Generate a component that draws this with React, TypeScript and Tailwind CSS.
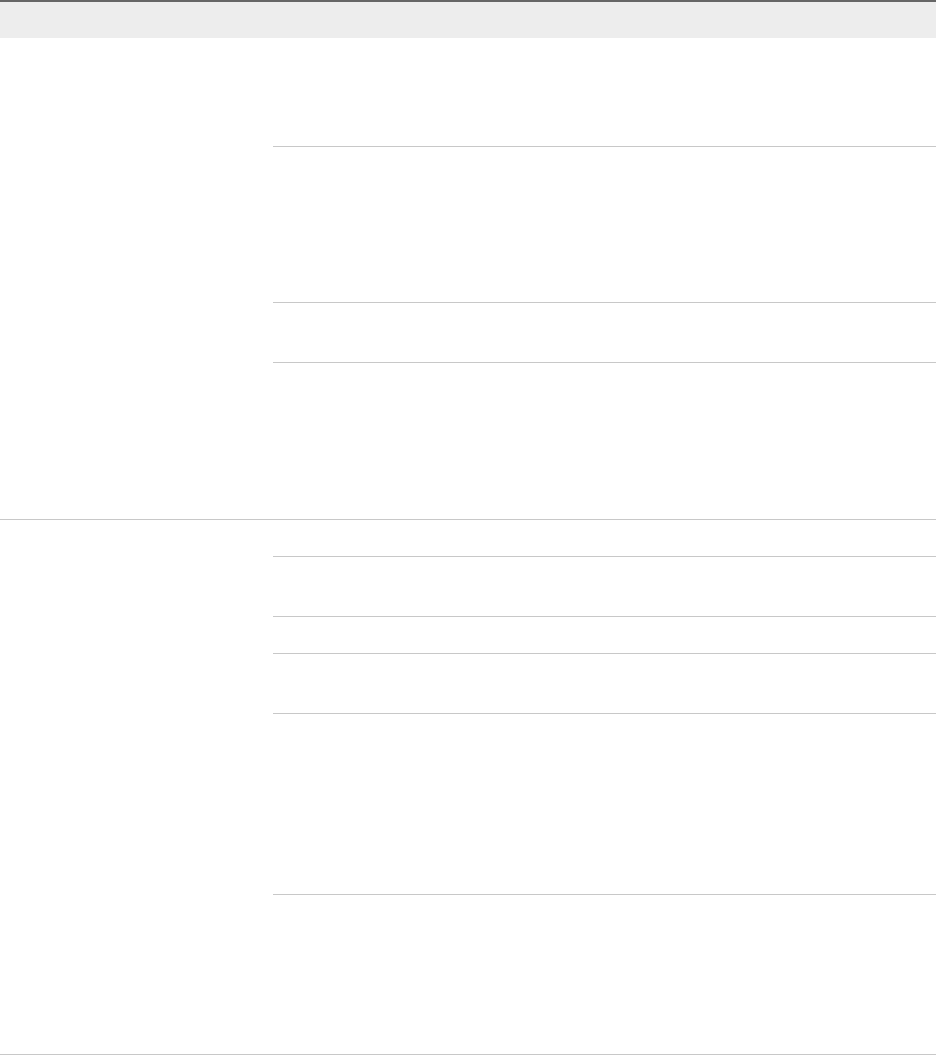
// row box heights (border-box, border included where a row has one)
const groups: number[][] = [
  [109, 156, 60, 156],
  [37, 60, 37, 60, 181, 159],
];

export default function App() {
  return (
    <div className="w-[936px] bg-white font-['Liberation_Sans',sans-serif]">
      {/* Table head */}
      <div className="h-[38px] border-t-2 border-[#666666] bg-[#ededed]" />

      {groups.map((rows, gi) => (
        <div key={gi} className="flex border-b border-[#c8c8c8]">
          <div className="w-[273px] shrink-0" />
          <div className="flex-1">
            {rows.map((h, ri) => (
              <div
                key={ri}
                className={ri < rows.length - 1 ? 'border-b border-[#c8c8c8]' : ''}
                style={{ height: h }}
              />
            ))}
          </div>
        </div>
      ))}
    </div>
  );
}
